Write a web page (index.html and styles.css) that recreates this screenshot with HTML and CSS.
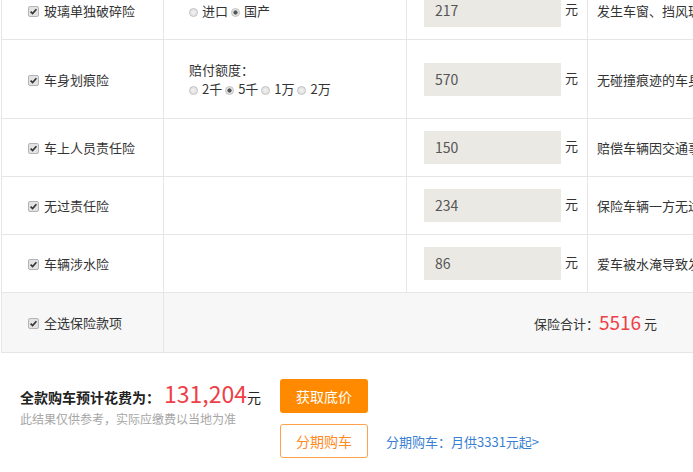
FILE: index.html
```html
<!DOCTYPE html>
<html lang="zh-CN">
<head>
  <meta charset="UTF-8" />
  <meta name="viewport" content="width=device-width, initial-scale=1.0" />
  <title>购车费用计算</title>
  <link rel="stylesheet" href="styles.css">
</head>
<body>
  <div class="calc">
    <table class="ins-table">
      <colgroup>
        <col class="col-name">
        <col class="col-opt">
        <col class="col-price">
        <col class="col-desc">
      </colgroup>
      <tr class="row-short">
        <td class="name"><span class="chk"></span>玻璃单独破碎险</td>
        <td class="opt">
          <span class="radio"></span>进口
          <span class="radio on"></span>国产
        </td>
        <td class="price"><span class="box">217</span>元</td>
        <td class="desc"><div class="clip">发生车窗、挡风玻璃单独破碎时，保险公司负责赔偿</div></td>
      </tr>
      <tr class="row-tall">
        <td class="name"><span class="chk"></span>车身划痕险</td>
        <td class="opt">
          <div class="opt-label">赔付额度：</div>
          <div>
            <span class="radio"></span>2千
            <span class="radio on"></span>5千
            <span class="radio"></span>1万
            <span class="radio"></span>2万
          </div>
        </td>
        <td class="price"><span class="box">570</span>元</td>
        <td class="desc"><div class="clip">无碰撞痕迹的车身表面油漆单独划伤</div></td>
      </tr>
      <tr class="row-short">
        <td class="name"><span class="chk"></span>车上人员责任险</td>
        <td class="opt"></td>
        <td class="price"><span class="box">150</span>元</td>
        <td class="desc"><div class="clip">赔偿车辆因交通事故造成的车内人员伤亡</div></td>
      </tr>
      <tr class="row-short">
        <td class="name"><span class="chk"></span>无过责任险</td>
        <td class="opt"></td>
        <td class="price"><span class="box">234</span>元</td>
        <td class="desc"><div class="clip">保险车辆一方无过错时，对第三者损失承担</div></td>
      </tr>
      <tr class="row-short">
        <td class="name"><span class="chk"></span>车辆涉水险</td>
        <td class="opt"></td>
        <td class="price"><span class="box">86</span>元</td>
        <td class="desc"><div class="clip">爱车被水淹导致发动机损坏时获得赔偿</div></td>
      </tr>
      <tr class="row-total">
        <td class="name"><span class="chk"></span>全选保险款项</td>
        <td class="total" colspan="3">保险合计：<em class="red">5516</em> 元</td>
      </tr>
    </table>

    <div class="summary">
      <div class="summary-left">
        <div class="sum-line">全款购车预计花费为：<em class="red big">131,204</em><span class="unit">元</span></div>
        <div class="sum-note">此结果仅供参考，实际应缴费以当地为准</div>
      </div>
      <div class="summary-right">
        <a class="btn btn-fill" href="#">获取底价</a>
        <div class="loan">
          <a class="btn btn-line" href="#">分期购车</a>
          <a class="loan-link" href="#">分期购车：月供3331元起&gt;</a>
        </div>
      </div>
    </div>
  </div>
</body>
</html>
```

FILE: styles.css
```css
body {
  margin: 0;
  font-family: "Noto Sans CJK SC", "Noto Sans", sans-serif;
  font-size: 13px;
  color: #333;
  background: #fff;
}

.calc {
  width: 693px;
  height: 472px;
  overflow: hidden;
}

.ins-table {
  border-collapse: collapse;
  table-layout: fixed;
  width: 760px;
  margin: -19px 0 0 1px;
}

.col-name { width: 162px; }
.col-opt { width: 243px; }
.col-price { width: 181px; }

.ins-table td {
  border: 1px solid #e6e6e6;
  padding: 0;
  vertical-align: middle;
  line-height: 19px;
}

.row-short td { height: 57px; }
.row-tall td { height: 78px; }
.row-total td {
  height: 59px;
  background: #f7f7f7;
}

.name {
  padding-left: 26px !important;
  white-space: nowrap;
}

.chk {
  display: inline-block;
  width: 9px;
  height: 9px;
  margin-right: 5px;
  vertical-align: -1px;
  border: 1px solid #b4b4b4;
  border-radius: 2px;
  background: #e3e3e3 url("data:image/svg+xml,%3Csvg xmlns='http://www.w3.org/2000/svg' viewBox='0 0 9 9'%3E%3Cpath d='M1.6 4.6 L3.6 6.6 L7.4 2.2' fill='none' stroke='%23333' stroke-width='1.6'/%3E%3C/svg%3E") center / 9px 9px no-repeat;
}

.opt {
  padding-left: 25px !important;
  white-space: nowrap;
}

.radio {
  display: inline-block;
  width: 9px;
  height: 9px;
  margin-right: 4px;
  vertical-align: -1px;
  border: 1px solid #c4c4c4;
  border-radius: 50%;
  background: radial-gradient(circle, #f2f2f2 0, #dcdcdc 100%);
  box-sizing: border-box;
}

.radio.on {
  background: radial-gradient(circle, #555 0, #555 1.8px, #e6e6e6 2.4px, #dcdcdc 100%);
}

.price {
  padding-left: 17px !important;
  white-space: nowrap;
}

.box {
  display: inline-block;
  width: 137px;
  height: 33px;
  line-height: 33px;
  padding-left: 11px;
  margin-right: 4px;
  box-sizing: border-box;
  background: #ebe9e4;
  color: #555;
  font-size: 14px;
  vertical-align: middle;
}

.desc {
  padding-left: 9px !important;
}

.clip {
  white-space: nowrap;
  overflow: hidden;
}

.total {
  text-align: right;
  padding-right: 103px !important;
  font-size: 13px;
}

.red {
  font-style: normal;
  color: #ee3f48;
}

.total .red {
  font-size: 19px;
  vertical-align: -1px;
}

.summary {
  display: flex;
  padding: 26px 0 0 20px;
}

.summary-left {
  width: 260px;
}

.sum-line {
  height: 28px;
  line-height: 28px;
  font-size: 14px;
  font-weight: bold;
  color: #222;
  white-space: nowrap;
}

.sum-line .big {
  font-size: 23px;
  font-weight: normal;
  margin-left: 4px;
}

.sum-line .unit {
  font-size: 14px;
  font-weight: normal;
  color: #222;
}

.sum-note {
  margin-top: 3px;
  font-size: 12px;
  line-height: 18px;
  color: #a6a6a6;
}

.summary-right {
  display: flex;
  flex-direction: column;
  gap: 11px;
}

.btn {
  display: block;
  width: 88px;
  height: 34px;
  line-height: 34px;
  text-align: center;
  font-size: 14px;
  border-radius: 3px;
  text-decoration: none;
  box-sizing: border-box;
}

.btn-fill {
  background: #ff8a00;
  color: #fff;
}

.btn-line {
  border: 1px solid #ffa24a;
  line-height: 32px;
  color: #ff8a1f;
}

.loan {
  display: flex;
  align-items: center;
  gap: 18px;
}

.loan-link {
  color: #3a7fd2;
  font-size: 13px;
  text-decoration: none;
  white-space: nowrap;
}
```
